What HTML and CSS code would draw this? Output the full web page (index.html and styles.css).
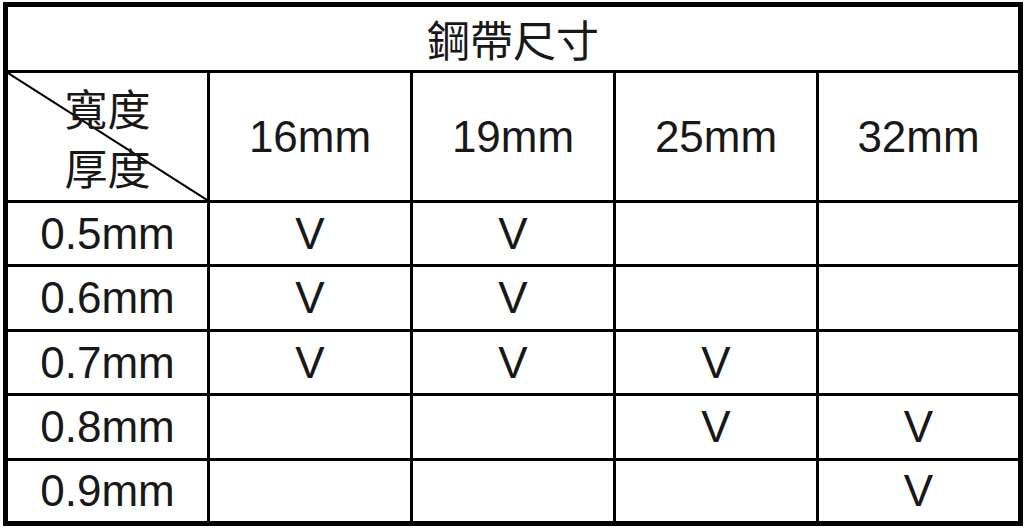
FILE: index.html
```html
<!DOCTYPE html>
<html lang="zh-Hant">
<head>
<meta charset="utf-8">
<title>鋼帶尺寸</title>
<link rel="stylesheet" href="styles.css">
</head>
<body>
<table class="sizes">
  <colgroup>
    <col class="c1"><col class="c"><col class="c"><col class="c"><col class="c">
  </colgroup>
  <tr class="r-title"><th colspan="5" class="title">鋼帶尺寸</th></tr>
  <tr class="r-head">
    <th class="diag">
      <svg class="diag-line" viewBox="0 0 100 100" preserveAspectRatio="none"><line x1="0" y1="0" x2="100" y2="100" stroke="#000" stroke-width="2" vector-effect="non-scaling-stroke"/></svg>
      <span class="cjk">寬度<br>厚度</span>
    </th>
    <th>16mm</th><th>19mm</th><th>25mm</th><th>32mm</th>
  </tr>
  <tr class="r-a"><td>0.5mm</td><td>V</td><td>V</td><td></td><td></td></tr>
  <tr class="r-b"><td>0.6mm</td><td>V</td><td>V</td><td></td><td></td></tr>
  <tr class="r-a"><td>0.7mm</td><td>V</td><td>V</td><td>V</td><td></td></tr>
  <tr class="r-b"><td>0.8mm</td><td></td><td></td><td>V</td><td>V</td></tr>
  <tr class="r-a"><td>0.9mm</td><td></td><td></td><td></td><td>V</td></tr>
</table>
</body>
</html>
```
FILE: styles.css
```css
html, body {
  margin: 0;
  padding: 0;
  background: #fff;
}
body {
  padding: 2px 0 0 3px;
}
.sizes {
  border-collapse: collapse;
  table-layout: fixed;
  width: 1016px;
  border: 5px solid #000;
  font-family: "Liberation Sans", Arial, "Noto Sans CJK TC", sans-serif;
  font-size: 44px;
  color: #181818;
}
.c1 { width: 203px; }
.c { width: 203px; }
.sizes th, .sizes td {
  border: 3px solid #000;
  padding: 0;
  text-align: center;
  vertical-align: middle;
  font-weight: normal;
  line-height: 1;
}
.r-title { height: 67px; }
.r-head { height: 130px; }
.r-a { height: 64px; }
.r-b { height: 65px; }
.title, .cjk {
  font-family: "Noto Sans CJK TC", "Noto Sans CJK SC", sans-serif;
  font-size: 43px;
}
.title {
  padding-bottom: 2px;
}
.diag {
  position: relative;
}
.cjk {
  display: block;
  line-height: 59px;
  position: relative;
}
.diag-line {
  position: absolute;
  left: 0;
  top: 0;
  width: 100%;
  height: 100%;
}
```
